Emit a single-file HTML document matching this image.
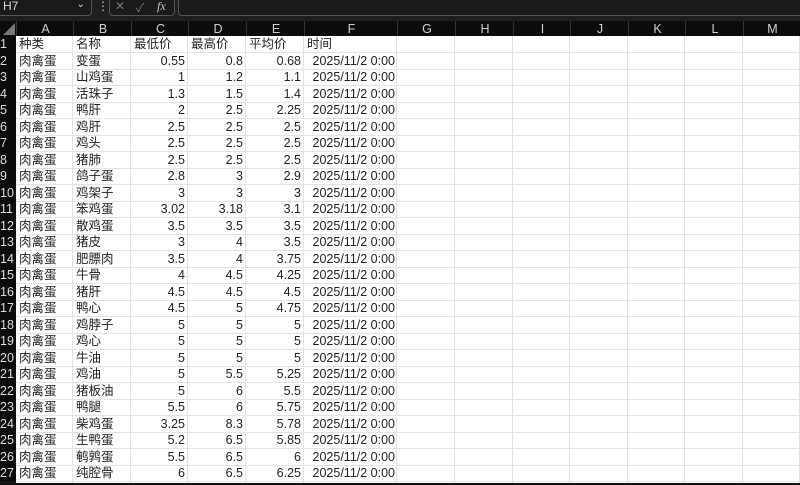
<!DOCTYPE html><html><head><meta charset="utf-8"><style>
body{margin:0;width:800px;height:485px;overflow:hidden;background:#1f1f1f;font-family:"Liberation Sans","Noto Sans CJK SC",sans-serif;position:relative}
.box{position:absolute;top:-2px;height:16px;border:1px solid #555;border-radius:4px;background:#1a1a1a;color:#ddd;font-size:12px}
#hdr{position:absolute;top:21px;left:0;width:800px;height:15px;background:#0c0c0c}
.ch{position:absolute;top:21px;height:15px;color:#d0d0d0;font-size:12.5px;text-align:center;line-height:16px;border-left:1px solid #333}
#grid{position:absolute;top:36px;left:16px;width:784px;height:447px;background:#fff}
.rh{position:absolute;left:0;width:16px;color:#ddd;background:#0c0c0c;font-size:12.5px;line-height:16px;text-align:left}
.c{position:absolute;font-size:12.5px;color:#222;line-height:16px;white-space:nowrap;height:16px}
.vl{position:absolute;top:36px;width:1px;height:447px;background:#e3e3e3}
.hl{position:absolute;left:16px;width:784px;height:1px;background:#e3e3e3}
</style></head><body>
<div class="box" style="left:-4px;width:94px"><span style="position:absolute;left:6px;top:0">H7</span><span style="position:absolute;right:6px;top:0;font-size:10px">&#8964;</span></div>
<div style="position:absolute;left:97px;top:0;color:#ccc;font-size:12px;line-height:12px">&#8942;</div>
<div class="box" style="left:109px;width:64px;color:#777"><span style="position:absolute;left:5px;top:0">&#10005;</span><span style="position:absolute;left:26px;top:0">&#10003;</span><span style="position:absolute;left:47px;top:0;color:#ccc;font-style:italic;font-family:'Liberation Serif',serif">fx</span></div>
<div class="box" style="left:178px;width:640px"></div>
<div id="hdr"></div>
<svg style="position:absolute;left:3px;top:23px" width="12" height="12"><polygon points="12,0 12,12 0,12" fill="#777"/></svg>
<div id="grid"></div>
<div id="cells"></div>
<div style="position:absolute;left:0;top:483px;width:800px;height:2px;background:#111"></div>
<script>
var cols=[["A",16,73],["B",73,131],["C",131,188],["D",188,246],["E",246,304],["F",304,397],["G",397,455],["H",455,513],["I",513,570],["J",570,628],["K",628,685],["L",685,743],["M",743,800]];
var h="";
cols.forEach(function(c){h+='<div class="ch" style="left:'+c[1]+'px;width:'+(c[2]-c[1])+'px">'+c[0]+'</div>';h+='<div class="vl" style="left:'+(c[2]-1)+'px"></div>';});
var d=[["种类","名称","最低价","最高价","平均价","时间"],
["变蛋",0.55,0.8,0.68],["山鸡蛋",1,1.2,1.1],["活珠子",1.3,1.5,1.4],["鸭肝",2,2.5,2.25],["鸡肝",2.5,2.5,2.5],["鸡头",2.5,2.5,2.5],["猪肺",2.5,2.5,2.5],["鸽子蛋",2.8,3,2.9],["鸡架子",3,3,3],["笨鸡蛋",3.02,3.18,3.1],["散鸡蛋",3.5,3.5,3.5],["猪皮",3,4,3.5],["肥膘肉",3.5,4,3.75],["牛骨",4,4.5,4.25],["猪肝",4.5,4.5,4.5],["鸭心",4.5,5,4.75],["鸡脖子",5,5,5],["鸡心",5,5,5],["牛油",5,5,5],["鸡油",5,5.5,5.25],["猪板油",5,6,5.5],["鸭腿",5.5,6,5.75],["柴鸡蛋",3.25,8.3,5.78],["生鸭蛋",5.2,6.5,5.85],["鹌鹑蛋",5.5,6.5,6],["纯腔骨",6,6.5,6.25]];
for(var i=0;i<27;i++){var t=36+i*16.5;
h+='<div class="rh" style="top:'+t+'px;height:17px">'+(i+1)+'</div>';
h+='<div class="hl" style="top:'+(t+16)+'px"></div>';
var r=d[i];
if(i==0){for(var k=0;k<6;k++)h+='<div class="c" style="top:'+t+'px;left:'+(cols[k][1]+3)+'px">'+r[k]+'</div>';}
else{h+='<div class="c" style="top:'+t+'px;left:19px">肉禽蛋</div><div class="c" style="top:'+t+'px;left:76px">'+r[0]+'</div>';
for(var k=1;k<4;k++)h+='<div class="c" style="top:'+t+'px;left:'+cols[k+1][1]+'px;width:'+(cols[k+1][2]-cols[k+1][1]-3)+'px;text-align:right">'+r[k]+'</div>';
h+='<div class="c" style="top:'+t+'px;left:304px;width:91px;text-align:right">2025/11/2 0:00</div>';}}
document.getElementById("cells").innerHTML=h;
</script>
</body></html>
